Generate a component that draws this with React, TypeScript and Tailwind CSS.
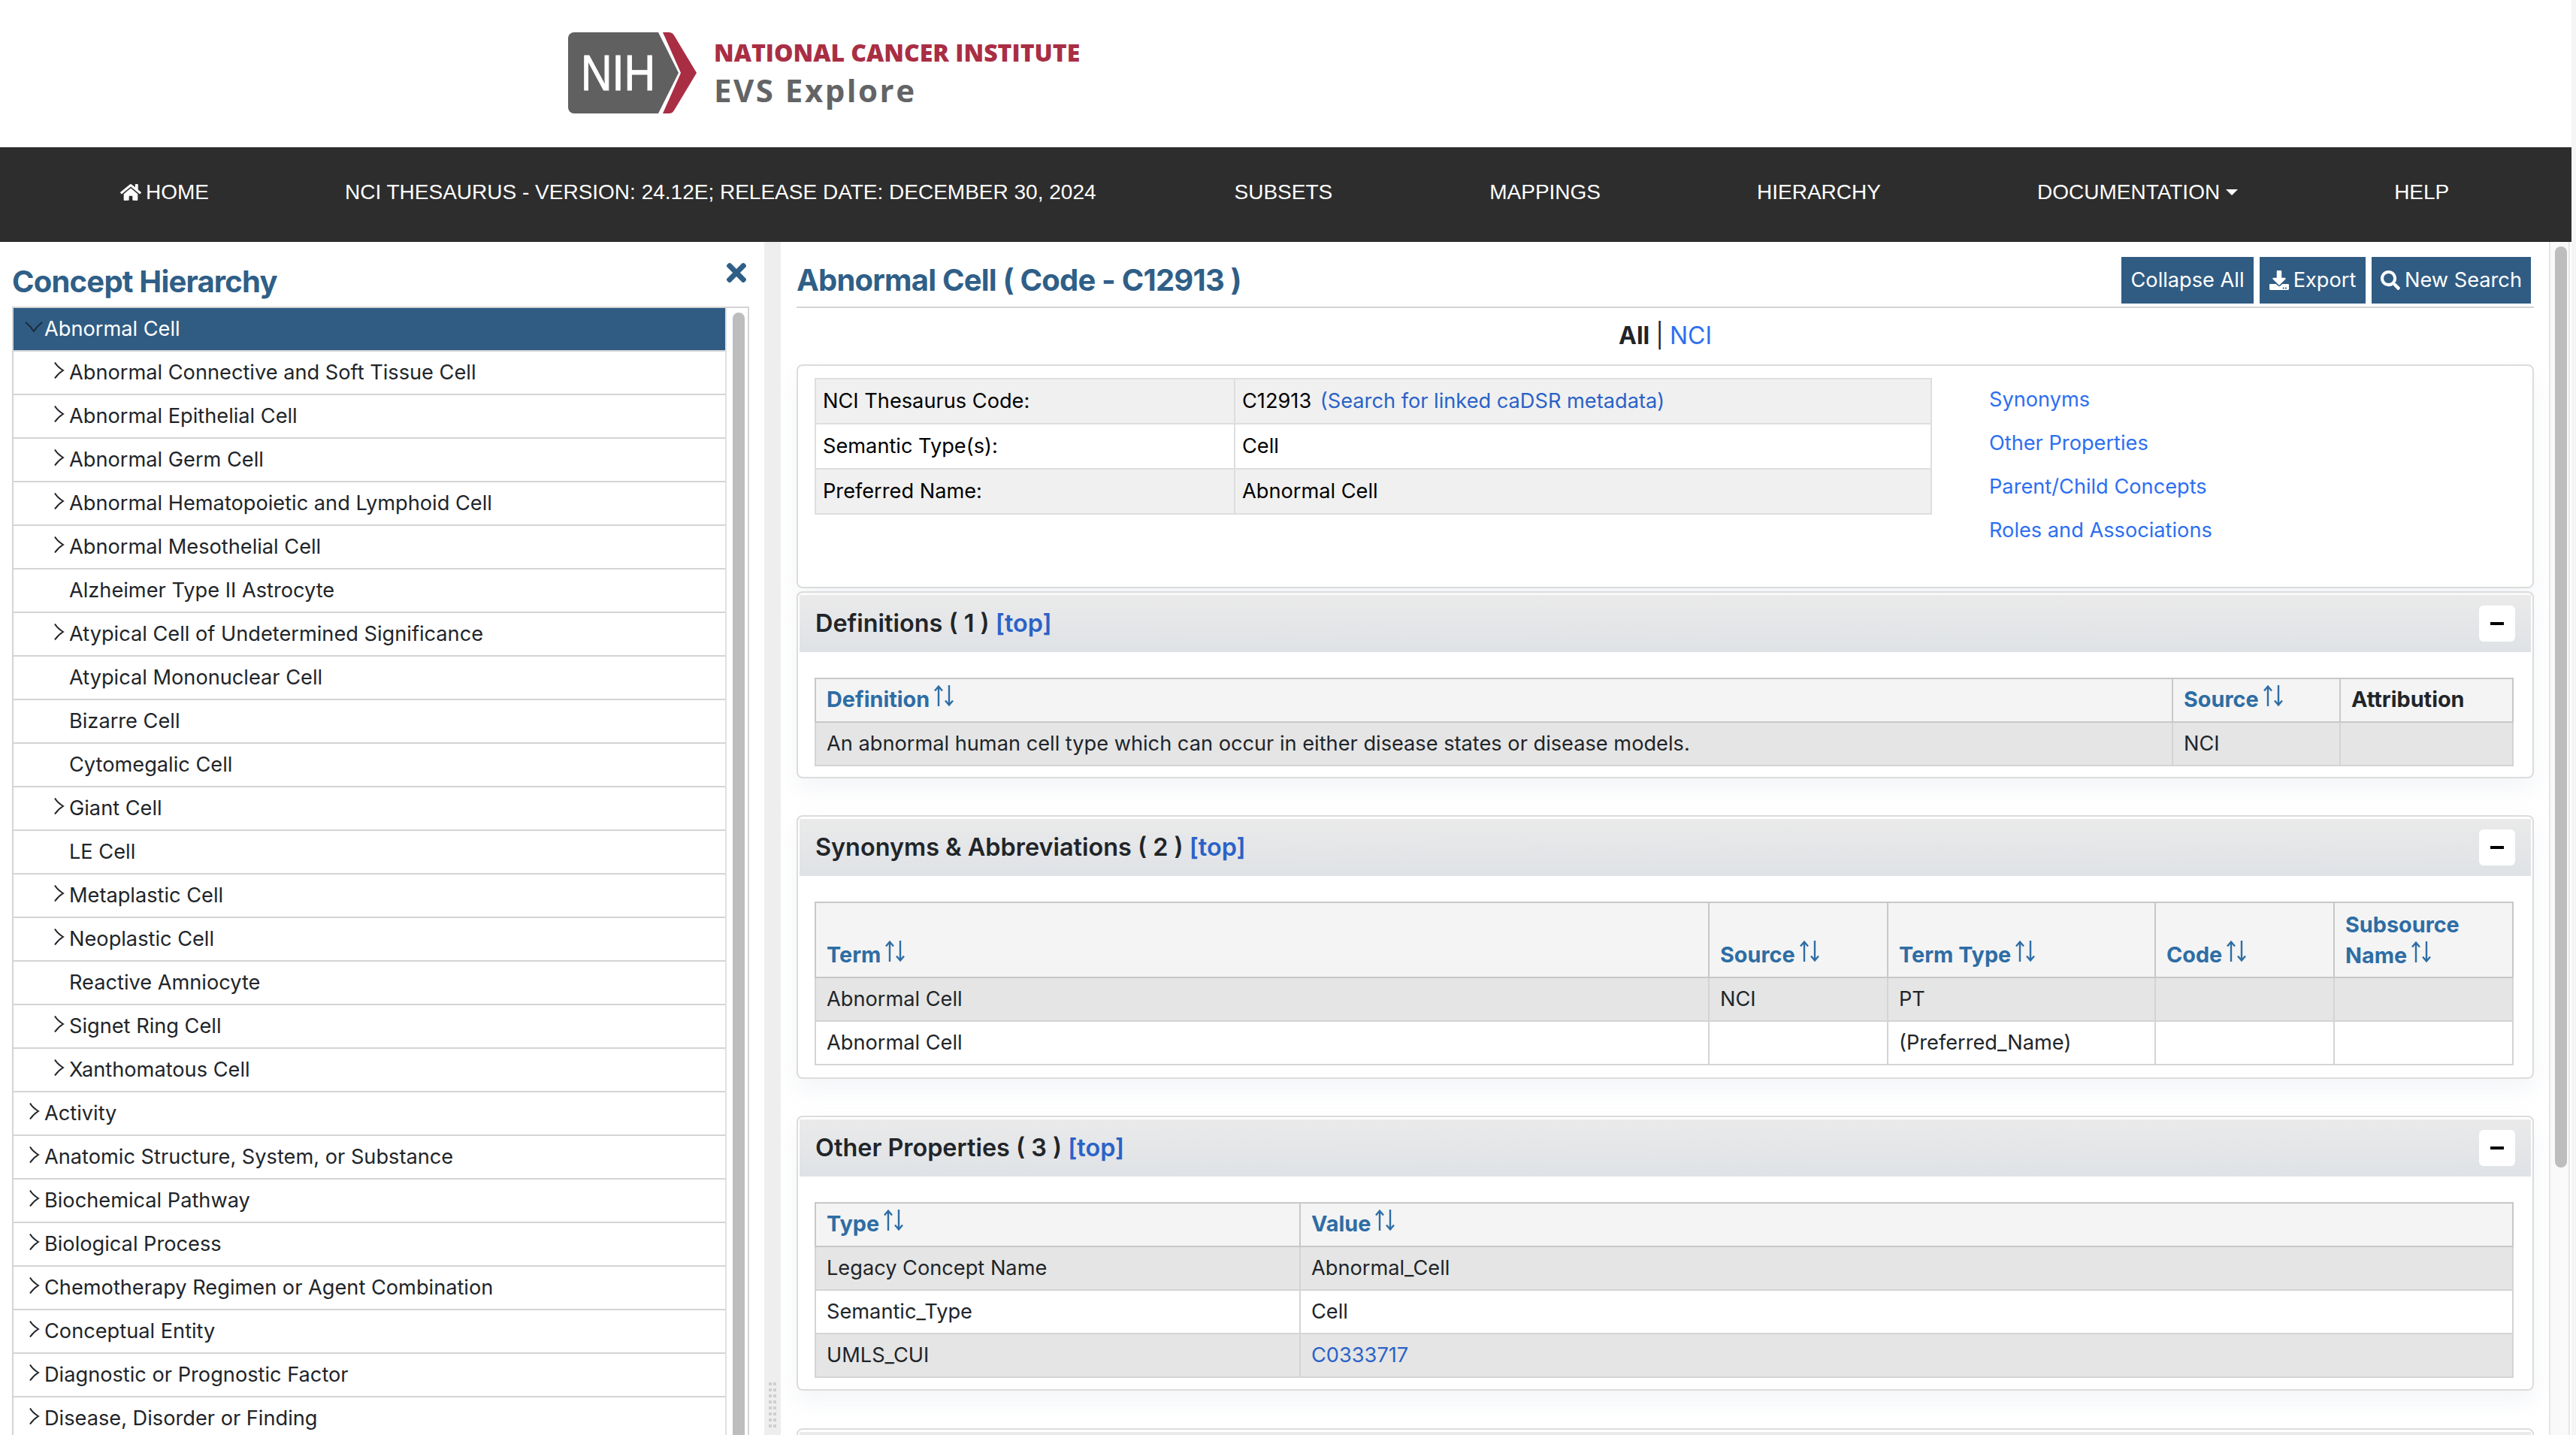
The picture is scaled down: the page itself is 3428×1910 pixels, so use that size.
import { FaDownload, FaHome, FaSearch, FaTimes } from "react-icons/fa";

const childNodes: [string, boolean][] = [
  ["Abnormal Connective and Soft Tissue Cell", true],
  ["Abnormal Epithelial Cell", true],
  ["Abnormal Germ Cell", true],
  ["Abnormal Hematopoietic and Lymphoid Cell", true],
  ["Abnormal Mesothelial Cell", true],
  ["Alzheimer Type II Astrocyte", false],
  ["Atypical Cell of Undetermined Significance", true],
  ["Atypical Mononuclear Cell", false],
  ["Bizarre Cell", false],
  ["Cytomegalic Cell", false],
  ["Giant Cell", true],
  ["LE Cell", false],
  ["Metaplastic Cell", true],
  ["Neoplastic Cell", true],
  ["Reactive Amniocyte", false],
  ["Signet Ring Cell", true],
  ["Xanthomatous Cell", true],
];

const rootNodes = [
  "Activity",
  "Anatomic Structure, System, or Substance",
  "Biochemical Pathway",
  "Biological Process",
  "Chemotherapy Regimen or Agent Combination",
  "Conceptual Entity",
  "Diagnostic or Prognostic Factor",
  "Disease, Disorder or Finding",
];

function SortIcon() {
  return (
    <svg viewBox="0 0 30 30" className="inline-block w-[30px] h-[32px] ml-[4px] align-[-1px]" fill="none" stroke="currentColor" strokeWidth="2.4">
      <path d="M8 29V3M3 8.500L8 2.500 13 8.500" />
      <path d="M22 1v26M17 21.500l5 6 5-6" />
    </svg>
  );
}

function TreeRow({ label, indent, hasChildren }: { label: string; indent: boolean; hasChildren: boolean }) {
  return (
    <div className={`flex items-center h-[58px] border-b-2 border-[#d4d4d4] text-[#212529] ${indent ? "pl-[53px]" : "pl-[20px]"}`}>
      <span className="w-[21px] shrink-0 flex">
        {hasChildren && (
          <svg viewBox="0 0 15 22" className="w-[15px] h-[22px] -mt-[6px]" fill="none" stroke="#212529" strokeWidth="2">
            <path d="M2 .500c3 5 7 8 11 10.500-4 2.500-8 6-11 10.500" />
          </svg>
        )}
      </span>
      <span>{label}</span>
    </div>
  );
}

function SectionCard({ title, className, children }: { title: string; className: string; children: React.ReactNode }) {
  return (
    <section className={`border-2 border-[#dcdcdc] rounded-lg px-[2px] shadow-[0_14px_30px_rgba(200,210,225,0.22)] ${className}`}>
      <div className="flex items-center justify-between h-[76px] mt-[3px] pl-[21px] pr-[21px] bg-gradient-to-b from-[#eaeaea] to-[#dfe2e6]">
        <h2 className="text-[32.4px] font-semibold text-[#212529]">
          {title} <a className="text-[#2a62c8]">[top]</a>
        </h2>
        <button className="w-[48px] h-[48px] bg-white rounded-md flex items-center justify-center">
          <span className="w-[18px] h-[4px] bg-black" />
        </button>
      </div>
      {children}
    </section>
  );
}

const thClass = "border-2 border-[#c8c8c8] bg-[#f4f4f4] px-[14px] align-bottom text-left text-[28.8px] font-bold text-[#2e6da4] pb-[8px]";
const tdClass = "border-2 border-[#d4d4d4] px-[14px] font-normal text-[#212529]";

export default function App() {
  return (
    <div className="flex w-[3428px] h-[1910px] overflow-hidden bg-white font-['Inter',sans-serif] text-[27.2px]">
      <div className="w-[3422px] shrink-0">
        {/* ロゴ */}
        <header className="h-[196px] flex items-center pl-[756px] pb-[2px]">
          <svg viewBox="0 0 172 108" className="w-[172px] h-[108px]">
            <path d="M8 0H120L147 54 120 108H8a8 8 0 0 1-8-8V8a8 8 0 0 1 8-8z" fill="#606060" />
            <path d="M126 0h8c3 0 5 1 7 4L171 54 141 104c-2 3-4 4-7 4h-8l24-54z" fill="#a92e44" />
            <text x="17" y="77" fill="#fff" stroke="#fff" strokeWidth="1" fontFamily="Liberation Sans" fontSize="66" textLength="99" lengthAdjust="spacingAndGlyphs">NIH</text>
          </svg>
          <div className="ml-[22px] font-['Open_Sans',sans-serif]">
            <div className="text-[#a92e44] text-[32px] leading-[40px] font-extrabold mt-[2px] mb-[4px]">NATIONAL CANCER INSTITUTE</div>
            <div className="text-[#636466] text-[42px] leading-[52px] font-bold tracking-[2.5px]">EVS Explore</div>
          </div>
        </header>

        {/* ナビ */}
        <nav className="h-[126px] bg-[#2d2d2d] text-white flex items-center pl-[160px] pb-[6px] font-['Liberation_Sans',sans-serif] text-[28px] whitespace-nowrap">
          <a className="flex items-center gap-[6px]"><FaHome className="w-[28px] h-[28px]" />HOME</a>
          <a className="ml-[181px]">NCI THESAURUS - VERSION: 24.12E; RELEASE DATE: DECEMBER 30, 2024</a>
          <a className="ml-[184px]">SUBSETS</a>
          <a className="ml-[209px]">MAPPINGS</a>
          <a className="ml-[208px]">HIERARCHY</a>
          <a className="ml-[208px] flex items-center gap-[8px]">
            DOCUMENTATION
            <span className="border-x-[8px] border-x-transparent border-t-[8px] border-t-white" />
          </a>
          <a className="ml-[208px]">HELP</a>
        </nav>

        <div className="flex h-[1588px]">
          {/* 左ペイン: 階層ツリー */}
          <aside className="w-[1017px] shrink-0 pl-[16px] pr-[20px] overflow-hidden">
            <div className="flex justify-between h-[86px]">
              <h1 className="mt-[28px] text-[40px] leading-[50px] font-bold text-[#2f5f87] tracking-[-0.8px]">Concept Hierarchy</h1>
              <FaTimes className="w-[30px] h-[38px] mt-[22px] mr-[2px] text-[#2f5f87]" />
            </div>
            <div className="border-2 border-[#d4d4d4] flex">
              <div className="w-[947px] shrink-0">
                <div className="flex items-center h-[58px] border-b-2 border-[#d4d4d4] bg-[#305c83] text-white pl-[15px]">
                  <span className="w-[26px] shrink-0 flex">
                    <svg viewBox="0 0 24 14" className="w-[24px] h-[14px] -mt-[6px]" fill="none" stroke="#1f2937" strokeWidth="2">
                      <path d="M1 1c4 3 8 7 11 12 3-5 7-9 11-12" />
                    </svg>
                  </span>
                  <span>Abnormal Cell</span>
                </div>
                {childNodes.map(([label, hasChildren]) => (
                  <TreeRow key={label} label={label} indent hasChildren={hasChildren} />
                ))}
                {rootNodes.map((label) => (
                  <TreeRow key={label} label={label} indent={false} hasChildren />
                ))}
              </div>
              <div className="flex-1 border-l-2 border-[#e0e0e0] pl-[8px] pt-[6px]">
                <div className="w-[16px] h-[1600px] rounded-t-full bg-[#bdbdbd]" />
              </div>
            </div>
          </aside>

          {/* 仕切り */}
          <div className="w-[22px] shrink-0 bg-[#eeeeee] flex justify-center pt-[1518px]">
            <div className="grid grid-cols-2 gap-x-[2px] gap-y-[4px] h-fit">
              {Array.from({ length: 16 }).map((_, i) => (
                <span key={i} className="w-[4px] h-[4px] bg-[#cfcfcf]" />
              ))}
            </div>
          </div>

          {/* 右ペイン: 概念の詳細 */}
          <main className="w-[353px] flex-1 overflow-hidden pl-[21px] pr-[20px]">
            <div className="flex items-start justify-between h-[88px] pt-[20px] border-b-2 border-[#d4d4d4]">
              <h1 className="text-[40px] leading-[62px] font-bold text-[#2f5f87] tracking-[-0.8px]">Abnormal Cell ( Code - C12913 )</h1>
              <div className="flex gap-[8px] mr-[4px] text-white">
                <button className="h-[62px] w-[176px] bg-[#305c83]">Collapse All</button>
                <button className="h-[62px] w-[141px] bg-[#305c83] flex items-center justify-center gap-[6px]"><FaDownload className="w-[26px] h-[26px]" />Export</button>
                <button className="h-[62px] w-[212px] bg-[#305c83] flex items-center justify-center gap-[6px]"><FaSearch className="w-[26px] h-[26px]" />New Search</button>
              </div>
            </div>
            <div className="h-[75px] flex items-center justify-center text-[32px] pb-[2px]">
              <b className="font-bold text-[#212529]">All</b>
              <span className="mx-[8px] text-[#212529] font-normal">|</span>
              <a className="text-[#2d6ff0]">NCI</a>
            </div>

            <div className="border-2 border-[#dcdcdc] rounded-lg h-[298px] pl-[22px] pt-[16px] flex shadow-[0_14px_30px_rgba(200,210,225,0.22)]">
              <table className="w-[1487px] h-fit table-fixed border-collapse">
                <colgroup>
                  <col className="w-[558px]" />
                  <col />
                </colgroup>
                <tbody>
                  <tr className="h-[60px] bg-[#f0f0f0]">
                    <td className="border-2 border-[#dedede] px-[9px]">NCI Thesaurus Code:</td>
                    <td className="border-2 border-[#dedede] px-[9px]">C12913 <a className="ml-[4px] text-[#2a62c8]">(Search for linked caDSR metadata)</a></td>
                  </tr>
                  <tr className="h-[60px]">
                    <td className="border-2 border-[#dedede] px-[9px]">Semantic Type(s):</td>
                    <td className="border-2 border-[#dedede] px-[9px]">Cell</td>
                  </tr>
                  <tr className="h-[60px] bg-[#f0f0f0]">
                    <td className="border-2 border-[#dedede] px-[9px]">Preferred Name:</td>
                    <td className="border-2 border-[#dedede] px-[9px]">Abnormal Cell</td>
                  </tr>
                </tbody>
              </table>
              <ul className="ml-[76px] text-[#2d6ff0] leading-[58px]">
                <li>Synonyms</li>
                <li>Other Properties</li>
                <li>Parent/Child Concepts</li>
                <li>Roles and Associations</li>
              </ul>
            </div>

            <SectionCard title="Definitions ( 1 )" className="mt-[4px] h-[249px]">
              <div className="mt-[34px] pl-[20px] pr-[23px]">
                <table className="w-full table-fixed border-collapse">
                  <colgroup>
                    <col />
                    <col className="w-[223px]" />
                    <col className="w-[230px]" />
                  </colgroup>
                  <thead>
                    <tr className="h-[58px]">
                      <th className={thClass}>Definition<SortIcon /></th>
                      <th className={thClass}>Source<SortIcon /></th>
                      <th className={`${thClass} text-[#212529]`}>Attribution</th>
                    </tr>
                  </thead>
                  <tbody>
                    <tr className="h-[58px] bg-[#e5e5e5]">
                      <td className={tdClass}>An abnormal human cell type which can occur in either disease states or disease models.</td>
                      <td className={tdClass}>NCI</td>
                      <td className={tdClass} />
                    </tr>
                  </tbody>
                </table>
              </div>
            </SectionCard>

            <SectionCard title="Synonyms & Abbreviations ( 2 )" className="mt-[49px] h-[351px]">
              <div className="mt-[34px] pl-[20px] pr-[23px]">
                <table className="w-full table-fixed border-collapse">
                  <colgroup>
                    <col />
                    <col className="w-[238px]" />
                    <col className="w-[356px]" />
                    <col className="w-[238px]" />
                    <col className="w-[238px]" />
                  </colgroup>
                  <thead>
                    <tr className="h-[100px]">
                      <th className={thClass}>Term<SortIcon /></th>
                      <th className={thClass}>Source<SortIcon /></th>
                      <th className={thClass}>Term Type<SortIcon /></th>
                      <th className={thClass}>Code<SortIcon /></th>
                      <th className={`${thClass} leading-[40px]`}>Subsource Name<SortIcon /></th>
                    </tr>
                  </thead>
                  <tbody>
                    <tr className="h-[58px] bg-[#e5e5e5]">
                      <td className={tdClass}>Abnormal Cell</td>
                      <td className={tdClass}>NCI</td>
                      <td className={tdClass}>PT</td>
                      <td className={tdClass} />
                      <td className={tdClass} />
                    </tr>
                    <tr className="h-[58px]">
                      <td className={tdClass}>Abnormal Cell</td>
                      <td className={tdClass} />
                      <td className={tdClass}>(Preferred_Name)</td>
                      <td className={tdClass} />
                      <td className={tdClass} />
                    </tr>
                  </tbody>
                </table>
              </div>
            </SectionCard>

            <SectionCard title="Other Properties ( 3 )" className="mt-[49px] h-[366px]">
              <div className="mt-[34px] pl-[20px] pr-[23px]">
                <table className="w-full table-fixed border-collapse">
                  <colgroup>
                    <col className="w-[645px]" />
                    <col />
                  </colgroup>
                  <thead>
                    <tr className="h-[58px]">
                      <th className={thClass}>Type<SortIcon /></th>
                      <th className={thClass}>Value<SortIcon /></th>
                    </tr>
                  </thead>
                  <tbody>
                    <tr className="h-[58px] bg-[#e5e5e5]">
                      <td className={tdClass}>Legacy Concept Name</td>
                      <td className={tdClass}>Abnormal_Cell</td>
                    </tr>
                    <tr className="h-[58px]">
                      <td className={tdClass}>Semantic_Type</td>
                      <td className={tdClass}>Cell</td>
                    </tr>
                    <tr className="h-[58px] bg-[#e5e5e5]">
                      <td className={tdClass}>UMLS_CUI</td>
                      <td className={tdClass}><a className="text-[#2a62c8]">C0333717</a></td>
                    </tr>
                  </tbody>
                </table>
              </div>
            </SectionCard>

            <div className="mt-[50px] h-[40px] border-2 border-[#dcdcdc] rounded-t-lg px-[2px] pt-[3px]">
              <div className="h-full bg-[#eaeaea]" />
            </div>
          </main>

          {/* 右スクロールバー */}
          <div className="w-[28px] shrink-0 border-x-2 border-[#e6e6e6] bg-[#f9f9f9] pl-[6px] pt-[6px]">
            <div className="w-[16px] h-[1226px] rounded-full bg-[#bdbdbd]" />
          </div>
          <div className="w-[2px] shrink-0" />
        </div>
      </div>
      <div className="flex-1 bg-[#f5f5f5]" />
    </div>
  );
}
